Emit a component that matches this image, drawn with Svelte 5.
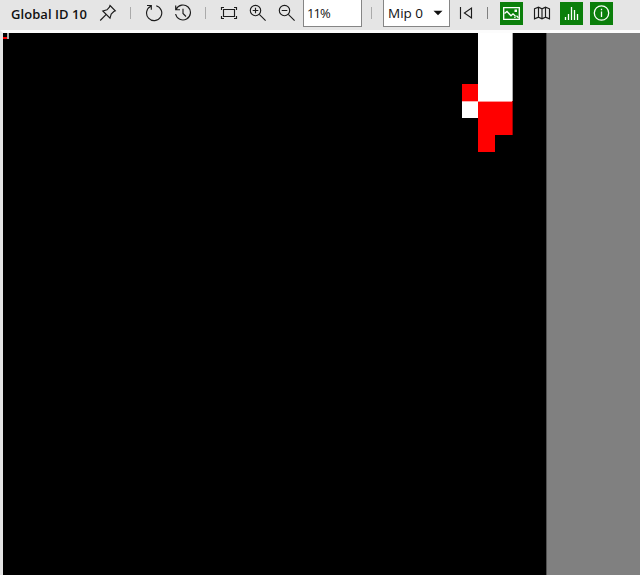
<script>
  const blocks = [
    { x: 475, y: 0, w: 34, h: 68, fill: '#fff' },
    { x: 459, y: 51, w: 16, h: 17, fill: '#f00' },
    { x: 459, y: 69, w: 16, h: 16, fill: '#fff' },
    { x: 475, y: 69, w: 34, h: 33, fill: '#f00' },
    { x: 475, y: 102, w: 17, h: 17, fill: '#f00' }
  ];
</script>

<div class="viewer">
  <header class="toolbar">
    <span class="title">Global ID 10</span>
    <svg class="pin" width="18" height="18" viewBox="0 0 18 18"><path d="M11 1.5 16.3 6.8 14.8 7.5 12.2 10 11 14.2 3.8 7 8 5.8 10.4 3.2ZM7 10.7 1.2 16.5" /></svg>
    <i class="sep s1"></i>
    <svg class="refresh" width="18" height="18" viewBox="0 0 18 18"><path d="M11.2 1.7A7.6 7.6 0 1 1 5.8 2.2M2 1.5H6.3V5.7" /></svg>
    <svg class="history" width="18" height="18" viewBox="0 0 18 18"><path d="M2.2 5.2A7.5 7.5 0 1 1 1.6 10M1.7 1.5V5.7H6M9 4.8V9.5L12 12.5" /></svg>
    <i class="sep s2"></i>
    <svg class="fit" width="18" height="14" viewBox="0 0 18 14"><path d="M3.5 3.5H14.5V10.5H3.5ZM1.5 4V1.5H4M14 1.5H16.5V4M16.5 10V12.5H14M4 12.5H1.5V10" /></svg>
    <svg class="zoomin" width="18" height="18" viewBox="0 0 18 18"><circle cx="6.5" cy="6.5" r="5.2" /><path d="M10.3 10.3 16.6 16.6M6.5 3.7V9.3M3.7 6.5H9.3" /></svg>
    <svg class="zoomout" width="18" height="18" viewBox="0 0 18 18"><circle cx="6.5" cy="6.5" r="5.2" /><path d="M10.3 10.3 16.6 16.6M3.7 6.5H9.3" /></svg>
    <div class="field percent">11%</div>
    <i class="sep s3"></i>
    <div class="field mip"><span>Mip 0</span><svg width="10" height="6" viewBox="0 0 10 6"><path class="solid" d="M.5.7H9.5L5 5.3Z" /></svg></div>
    <svg class="first" width="14" height="14" viewBox="0 0 14 14"><path d="M1.5 1V13M12.5 2V12L5.4 7Z" /></svg>
    <i class="sep dark s4"></i>
    <span class="toggle t1"><svg width="23" height="23" viewBox="0 0 23 23"><path d="M3.7 5.7H19.3V17.3H3.7Z" /><path d="M4.5 11.5 7 9.5 11 13.8 13 11.8 15.5 14.3M15.5 14.3 14.5 15.8M16.5 13.8 18.5 15.8" /><rect class="solid" x="14.5" y="7.5" width="2.5" height="2.5" /></svg></span>
    <svg class="map" width="18" height="14" viewBox="0 0 18 14"><path d="M1.5 2.8 5.5 1.2 9 2.8 12.5 1.2 16.5 2.8V12.8L12.5 11.2 9 12.8 5.5 11.2 1.5 12.8ZM5.5 1.2V11.2M9 2.8V12.8M12.5 1.2V11.2" /></svg>
    <span class="toggle t2"><svg width="23" height="23" viewBox="0 0 23 23"><path d="M5.5 15V18M8.5 12V18M11.5 5V18M14.5 8V18M17.5 12V18" /></svg></span>
    <span class="toggle t3"><svg width="23" height="23" viewBox="0 0 23 23"><circle cx="11.5" cy="11" r="7.2" /><path d="M11.5 9.5V15M11.5 6.7V8.2" /></svg></span>
  </header>
  <main class="stage">
    <svg class="texture" width="544" height="542" viewBox="0 0 544 542" shape-rendering="crispEdges">
      <rect width="543" height="542" fill="#000" />
      <rect x="543" width="1" height="542" fill="#505050" />
      {#each blocks as b}
        <rect x={b.x} y={b.y} width={b.w} height={b.h} fill={b.fill} />
      {/each}
      <rect x="475" y="68" width="34" height="1" fill="#ff9494" />
      <rect x="459" y="68" width="16" height="1" fill="#ffb0b0" />
      <rect x="509" width="1" height="68" fill="#aaa" />
      <rect x="509" y="68" width="1" height="34" fill="#a00000" />
      <rect x="4" width="2" height="6" fill="#aaa" />
      <rect y="4" width="4" height="2" fill="#f00" />
    </svg>
  </main>
</div>

<style>
  .viewer {
    width: 640px;
    height: 575px;
    display: flex;
    flex-direction: column;
    overflow: hidden;
    background: #e6e6e6;
    font-family: "Open Sans", "Noto Sans", sans-serif;
    font-size: 13px;
    color: #111;
  }
  .toolbar {
    height: 30px;
    flex: none;
    display: flex;
    align-items: flex-start;
    background: #e5e5e5;
  }
  .toolbar > * { flex: none; box-sizing: border-box; }
  svg { display: block; fill: none; stroke: #1c1c1c; stroke-width: 1.15; }
  .texture { stroke: none; }
  .solid { fill: currentColor; stroke: none; }
  .title {
    width: 76px;
    margin: 5px 0 0 11px;
    line-height: 18px;
    font-weight: 600;
    font-size: 13px;
    letter-spacing: 0.06px;
    white-space: nowrap;
  }
  .pin { margin: 4px 0 0 12px; }
  .sep { width: 1px; height: 12px; margin-top: 7px; background: #aaa; }
  .dark { background: #808080; }
  .s1 { margin-left: 13px; }
  .refresh { margin: 4px 0 0 14px; }
  .history { margin: 4px 0 0 11px; }
  .s2 { margin-left: 13px; }
  .fit { margin: 6px 0 0 14px; }
  .zoomin { margin: 4px 0 0 11px; }
  .zoomout { margin: 4px 0 0 11px; }
  .field {
    height: 27px;
    border: 1px solid #858585;
    border-top: 0;
    background: #fff;
    line-height: 26px;
    white-space: nowrap;
  }
  .percent { width: 59px; margin-left: 7px; padding-left: 3px; letter-spacing: -0.9px; }
  .s3 { margin-left: 9px; }
  .mip {
    width: 67px;
    margin-left: 11px;
    padding: 0 6px 0 4px;
    display: flex;
    justify-content: space-between;
    align-items: center;
    font-size: 13.5px;
  }
  .first { margin: 6px 0 0 9px; }
  .s4 { margin-left: 14px; }
  .toggle { width: 23px; height: 23px; margin-top: 2px; background: #0b7f0b; color: #fff; }
  .toggle svg { stroke: #fff; stroke-width: 1.3; }
  .t1 { margin-left: 12px; }
  .map { margin: 6px 0 0 10px; }
  .t2 { margin-left: 9px; }
  .t3 { margin-left: 7px; }
  .stage {
    height: 542px;
    border-top: 3px solid #fcfcfc;
    border-left: 3px solid #e4e4e4;
    background: #808080;
  }
</style>
